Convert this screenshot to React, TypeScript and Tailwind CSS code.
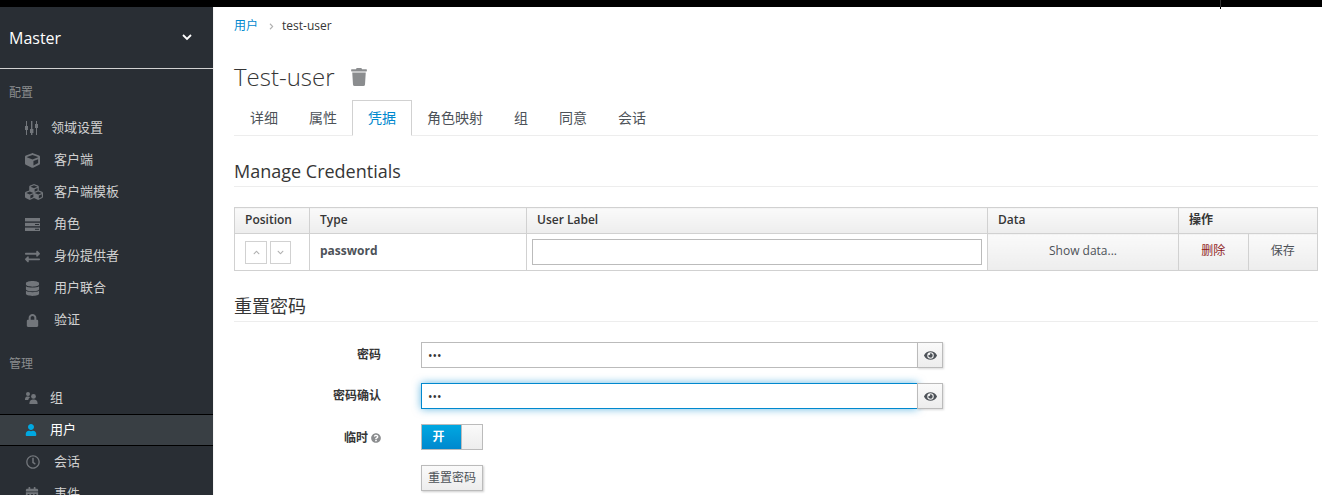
import { ReactNode } from "react"
import { FaCalendarAlt, FaChevronDown, FaChevronUp, FaCube, FaCubes, FaDatabase, FaExchangeAlt, FaEye, FaLock, FaQuestionCircle, FaRegClock, FaTrash, FaUser } from "react-icons/fa"

function SlidersIcon() {
    return (
        <svg viewBox="0 0 14 14" className="w-[14px] h-[14px]" fill="#72767b">
            <rect x="1" y="0" width="1" height="14" />
            <rect x="0" y="5" width="3" height="4" />
            <rect x="6" y="0" width="1.4" height="14" />
            <rect x="5" y="8" width="3.4" height="4" />
            <rect x="11" y="0" width="1" height="14" />
            <rect x="10" y="3" width="3" height="4" />
        </svg>
    )
}

function ServerIcon() {
    return (
        <svg viewBox="0 0 15 13" className="w-[15px] h-[13px]">
            <rect x="0" y="0" width="15" height="3.4" fill="#72767b" />
            <rect x="0" y="4.8" width="15" height="3.4" fill="#72767b" />
            <rect x="0" y="9.6" width="15" height="3.4" fill="#72767b" />
            <rect x="10" y="6" width="4" height="1" fill="#292e34" />
            <rect x="10" y="10.8" width="4" height="1" fill="#292e34" />
        </svg>
    )
}

function GroupIcon() {
    return (
        <svg viewBox="0 0 13 12" className="w-[13px] h-[12px]" fill="#72767b">
            <circle cx="3" cy="2" r="2" />
            <path d="M0 8 C0 5 1.5 4.6 3 4.6 C4 4.6 4.6 4.8 5 5.2 C4 6 3.4 7 3.2 8 Z" />
            <circle cx="8.5" cy="4.4" r="2.4" />
            <path d="M4.4 12 C4.4 8.6 6 7.6 8.5 7.6 C11 7.6 12.6 8.6 12.6 12 Z" />
        </svg>
    )
}

const configItems: { label: string; width: string; icon: ReactNode }[] = [
    { label: "领域设置", width: "w-[26px]", icon: <SlidersIcon /> },
    { label: "客户端", width: "w-[29px]", icon: <FaCube size={15} /> },
    { label: "客户端模板", width: "w-[29px]", icon: <FaCubes size={18} /> },
    { label: "角色", width: "w-[29px]", icon: <ServerIcon /> },
    { label: "身份提供者", width: "w-[29px]", icon: <FaExchangeAlt size={15} /> },
    { label: "用户联合", width: "w-[29px]", icon: <FaDatabase size={15} /> },
    { label: "验证", width: "w-[29px]", icon: <FaLock size={13} className="ml-[1px]" /> },
]

const manageItems: { label: string; width: string; icon: ReactNode; active?: boolean }[] = [
    { label: "组", width: "w-[25px]", icon: <GroupIcon /> },
    { label: "用户", width: "w-[25px]", icon: <FaUser size={12} className="text-[#00a8e1]" />, active: true },
    { label: "会话", width: "w-[29px]", icon: <FaRegClock size={14} className="ml-[1px]" /> },
    { label: "事件", width: "w-[29px]", icon: <FaCalendarAlt size={14} /> },
]

const tabs = ["详细", "属性", "凭据", "角色映射", "组", "同意", "会话"]

function NavItem({ label, width, icon, active }: { label: string; width: string; icon: ReactNode; active?: boolean }) {
    return (
        <div className={`h-8 flex items-center pl-[25px] text-[13px] ${active ? "bg-[#393f44] text-white border-y border-black" : "text-[#d1d1d1]"}`}>
            <div className={`${width} shrink-0 flex items-center text-[#72767b]`}>{icon}</div>
            <span>{label}</span>
        </div>
    )
}

function PasswordRow({ label, focused }: { label: string; focused?: boolean }) {
    return (
        <div className="flex items-center h-[26px]">
            <div className="w-[147px] text-right font-semibold text-xs text-[#363636]">{label}</div>
            <div className="ml-10 flex">
                <input
                    readOnly
                    type="password"
                    value="123"
                    className={`w-[497px] h-[26px] px-[6px] text-xs bg-white outline-none border ${focused ? "border-[#0088ce] shadow-[0_0_8px_rgba(0,136,206,0.6)]" : "border-[#bbbbbb]"}`}
                />
                <div className="w-[26px] h-[26px] -ml-px flex items-center justify-center border border-[#bbbbbb] bg-gradient-to-b from-[#fafafa] to-[#ededed] shadow-[1px_1px_2px_rgba(0,0,0,0.15)] text-[#4d5258]">
                    <FaEye size={13} />
                </div>
            </div>
        </div>
    )
}

export default function App() {
    return (
        <div className="relative h-[495px] overflow-hidden flex flex-col bg-white font-['Open_Sans','Noto_Sans_CJK_SC',sans-serif] text-[#363636]">
            <div className="h-[7px] bg-black shrink-0" />
            <div className="absolute left-[1220px] top-0 w-px h-[9px] bg-black border-t-[7px] border-[#333333]" />
            <div className="flex flex-1 min-h-0">
                <aside className="w-[213px] shrink-0 bg-[#292e34] overflow-hidden">
                    <div className="h-[62px] flex items-center justify-between pl-[9px] pr-[21px] border-b border-[#d1d1d1] text-white">
                        <span className="text-base">Master</span>
                        <svg viewBox="0 0 10 7" className="w-[10px] h-[7px]" fill="none" stroke="#ffffff" strokeWidth="1.8">
                            <polyline points="1,1 5,5 9,1" />
                        </svg>
                    </div>
                    <div className="pl-[9px] mt-[16px] text-xs leading-4 text-[#8b8d8f]">配置</div>
                    <div className="mt-[11px]">
                        {configItems.map((item) => (
                            <NavItem key={item.label} {...item} />
                        ))}
                    </div>
                    <div className="pl-[9px] mt-[20px] text-xs leading-4 text-[#8b8d8f]">管理</div>
                    <div className="mt-[10px]">
                        {manageItems.map((item) => (
                            <NavItem key={item.label} {...item} />
                        ))}
                    </div>
                </aside>

                <main className="flex-1 min-w-0 pl-5 pr-1 border-l border-[#f5f5f5]">
                    <div className="flex items-center h-[38px] text-xs">
                        <span className="text-[#0088ce]">用户</span>
                        <FaChevronDown size={7} className="ml-[10px] mr-[7px] -rotate-90 text-[#b0b0b0]" />
                        <span>test-user</span>
                    </div>
                    <div className="flex items-center mt-[12px] h-[40px]">
                        <h1 className="text-2xl font-light text-[#363636]">Test-user</h1>
                        <FaTrash size={18} className="ml-[15px] text-[#8b8d8f]" />
                    </div>
                    <div className="flex h-[36px] mt-[3px] border-b border-[#ededed] text-sm text-[#4d5258]">
                        {tabs.map((tab) => (
                            <div
                                key={tab}
                                className={`h-[36px] px-[15px] -mr-px flex items-center border ${tab === "凭据" ? "border-[#d1d1d1] border-b-white bg-white text-[#0088ce]" : "border-transparent"}`}
                            >
                                {tab}
                            </div>
                        ))}
                    </div>

                    <h2 className="mt-[23px] pb-[3px] h-[28px] text-lg leading-[24px] border-b border-[#ededed] text-[#363636]">Manage Credentials</h2>

                    <table className="mt-[20px] w-[1084px] table-fixed border-collapse text-xs">
                        <thead>
                            <tr className="h-[26px] text-left">
                                <th className="w-[75px] px-[10px] pb-[2px] font-semibold border border-[#d1d1d1] bg-gradient-to-b from-[#fafafa] to-[#ededed]">Position</th>
                                <th className="w-[217px] px-[10px] pb-[2px] font-semibold border border-[#d1d1d1] bg-gradient-to-b from-[#fafafa] to-[#ededed]">Type</th>
                                <th className="w-[461px] px-[10px] pb-[2px] font-semibold border border-[#d1d1d1] bg-gradient-to-b from-[#fafafa] to-[#ededed]">User Label</th>
                                <th className="w-[191px] px-[10px] pb-[2px] font-semibold border border-[#d1d1d1] bg-gradient-to-b from-[#fafafa] to-[#ededed]">Data</th>
                                <th colSpan={2} className="px-[10px] pb-[2px] font-semibold border border-[#d1d1d1] bg-gradient-to-b from-[#fafafa] to-[#ededed]">操作</th>
                            </tr>
                        </thead>
                        <tbody>
                            <tr className="h-[37px]">
                                <td className="border border-[#d1d1d1] px-[10px]">
                                    <div className="flex gap-[3px]">
                                        <div className="w-[22px] h-[23px] flex items-center justify-center border border-[#d1d1d1] text-[#b0b0b0]">
                                            <FaChevronUp size={7} />
                                        </div>
                                        <div className="w-[21px] h-[23px] flex items-center justify-center border border-[#d1d1d1] text-[#b0b0b0]">
                                            <FaChevronDown size={7} />
                                        </div>
                                    </div>
                                </td>
                                <td className="border border-[#d1d1d1] px-[10px] pb-[2px] font-bold text-[#4d5258]">password</td>
                                <td className="border border-[#d1d1d1] px-[5px]">
                                    <div className="h-[26px] border border-[#bbbbbb] bg-white" />
                                </td>
                                <td className="border border-[#d1d1d1] pb-[2px] text-center text-[#4d5258] bg-gradient-to-b from-[#fafafa] to-[#ededed]">Show data...</td>
                                <td className="w-[70px] border border-[#d1d1d1] pb-[2px] text-center text-[#8f1d1d] bg-gradient-to-b from-[#fafafa] to-[#ededed]">删除</td>
                                <td className="w-[70px] border border-[#d1d1d1] pb-[2px] text-center text-[#4d5258] bg-gradient-to-b from-[#fafafa] to-[#ededed]">保存</td>
                            </tr>
                        </tbody>
                    </table>

                    <h2 className="mt-[23px] h-[28px] text-lg leading-[24px] border-b border-[#ededed] text-[#363636]">重置密码</h2>

                    <div className="mt-[20px] flex flex-col gap-[15px]">
                        <PasswordRow label="密码" />
                        <PasswordRow label="密码确认" focused />
                        <div className="flex items-center h-[26px]">
                            <div className="w-[147px] pt-[1px] flex items-center justify-end gap-[3px] font-semibold text-xs">
                                临时
                                <FaQuestionCircle size={10} className="text-[#8b8d8f]" />
                            </div>
                            <div className="ml-10 w-[62px] h-[26px] flex border border-[#bbbbbb]">
                                <div className="w-[39px] pr-[6px] flex items-center justify-center bg-gradient-to-b from-[#00a8e1] to-[#0088ce] text-white text-xs font-bold">开</div>
                                <div className="flex-1 border-l border-[#bbbbbb] bg-gradient-to-b from-[#fafafa] to-[#ededed]" />
                            </div>
                        </div>
                        <div className="flex">
                            <div className="ml-[187px] w-[62px] h-[26px] flex items-center justify-center text-xs border border-[#bbbbbb] bg-gradient-to-b from-[#fafafa] to-[#ededed] text-[#4d5258] shadow-[1px_1px_2px_rgba(0,0,0,0.2)]">重置密码</div>
                        </div>
                    </div>
                </main>
            </div>
        </div>
    )
}
